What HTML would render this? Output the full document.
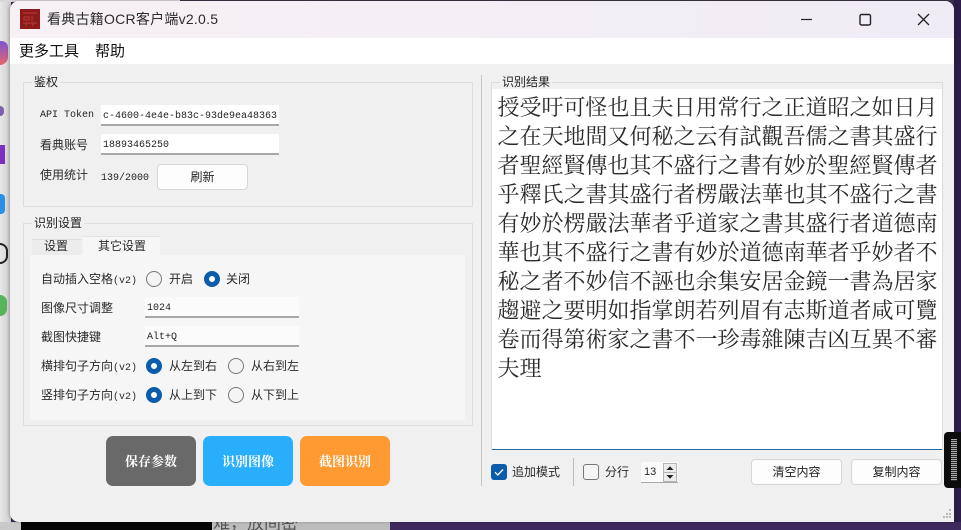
<!DOCTYPE html>
<html lang="zh"><head><meta charset="utf-8"><title>看典古籍OCR客户端v2.0.5</title>
<style>
html,body{margin:0;padding:0}
body{width:961px;height:530px;overflow:hidden;position:relative;background:#3a2757;font-family:"Liberation Sans","Noto Sans CJK SC",sans-serif;color:#222}
div,span{position:absolute;box-sizing:border-box;white-space:nowrap}
.l{font-size:12px;line-height:16px;color:#2a2a2a}
.v{font-style:normal;font-family:"Liberation Mono",monospace;font-size:10px}
.m{font-family:"Liberation Mono","Noto Sans CJK SC",monospace;font-size:10px;line-height:14px;color:#222}
.in{background:#fff;border-bottom:2px solid #a8a8a8;height:21px}
.g{border:1px solid #dcdcdc;background:#f0f0f0}
.gt{background:#f0f0f0;font-size:12px;line-height:16px;padding:0 2px;color:#222}
.r{width:16px;height:16px;border-radius:50%;background:#f4f4f4;border:1px solid #777}
.r.on{background:#fff;border:5px solid #0b5cab}
.b{background:#fdfdfd;border:1px solid #d6d6d6;border-radius:4px;text-align:center;font-size:12px;color:#222}
.bb{width:90px;height:50px;border-radius:7px;color:#fff;font-weight:700;font-size:13px;line-height:50px;text-align:center;font-family:"Noto Serif CJK SC",serif}
.t{left:497.5px;font-family:"Noto Serif CJK SC",serif;font-size:22px;line-height:29px;height:29px;color:#2a2a2a}
</style></head><body>

<!-- desktop background -->
<div style="left:0;top:0;width:11px;height:530px;background:linear-gradient(90deg,#e6e6e6,#cfcfcf)"></div>
<div style="left:0;top:0;width:961px;height:2px;background:#3a3344"></div>
<div style="left:0;top:0;width:180px;height:2px;background:#d8d8d8"></div>
<div style="left:954px;top:0;width:7px;height:530px;background:#2b1c48"></div>
<div style="left:0;top:522px;width:22px;height:8px;background:#c9c9c9"></div>
<div style="left:21px;top:522px;width:191px;height:8px;background:#050505"></div>
<div style="left:212px;top:522px;width:178px;height:8px;background:#bdbdbd;overflow:hidden"><span style="left:1px;top:-8px;font-size:17px;line-height:20px;color:#555">难，放间密</span></div>
<div style="left:390px;top:522px;width:571px;height:8px;background:#3f2a5e"></div>

<!-- desktop icons at left edge -->
<div style="left:0;top:41px;width:8px;height:24px;border-radius:0 8px 10px 0;background:linear-gradient(180deg,#7b55d6,#e8656a)"></div>
<div style="left:0;top:106px;width:4px;height:10px;background:#7a62a8;border-radius:0 5px 5px 0"></div>
<div style="left:0;top:145px;width:5px;height:19px;background:#7c2fc0"></div>
<div style="left:0;top:194px;width:5px;height:20px;background:#2b8fea;border-radius:0 4px 4px 0"></div>
<div style="left:0;top:243px;width:8px;height:21px;border:2px solid #222;border-left:0;border-radius:0 8px 8px 0"></div>
<div style="left:0;top:295px;width:7px;height:21px;background:#55b45c;border-radius:0 10px 10px 0"></div>

<!-- window -->
<div style="left:10px;top:1px;width:944px;height:521px;background:#f0f0f0;border-radius:9px 9px 0 9px;overflow:hidden;box-shadow:-1px 0 3px rgba(0,0,0,.25)">
  <div style="left:0;top:0;width:944px;height:37px;background:linear-gradient(90deg,#f7f1f5,#f0ecf5)"></div>
  <div style="left:0;top:37px;width:944px;height:26px;background:#fff"></div>
</div>

<!-- title bar -->
<svg style="position:absolute;left:20px;top:9px" width="20" height="20" viewBox="0 0 20 20"><rect width="20" height="20" fill="#8c1a1a"/><path d="M3 4h14M4 8h5v3H4zM12 7v5M3 14h14M6 14v3M13 14v3" stroke="#b5352f" stroke-width="1.2" fill="none"/></svg>
<div style="left:47px;top:9px;font-size:14px;line-height:20px;color:#2b2b2b;letter-spacing:.25px">看典古籍OCR客户端v2.0.5</div>
<svg style="position:absolute;left:790px;top:5px" width="150" height="28" viewBox="0 0 150 28" fill="none" stroke="#222">
<path d="M11 14.5H22" stroke-width="1.2"/>
<rect x="70" y="9.5" width="10.5" height="10.5" rx="1.5" stroke-width="1.4"/>
<path d="M128 9l11 11M139 9l-11 11" stroke-width="1.3"/>
</svg>

<!-- menu -->
<div style="left:19px;top:41px;font-size:15px;line-height:21px;color:#111">更多工具</div>
<div style="left:95px;top:41px;font-size:15px;line-height:21px;color:#111">帮助</div>

<!-- 鉴权 -->
<div class="g" style="left:23px;top:82px;width:450px;height:125px"></div>
<div class="gt" style="left:32px;top:74px">鉴权</div>
<div class="m" style="left:40px;top:109px">API Token</div>
<div class="in" style="left:101px;top:105px;width:178px"></div>
<div class="m" style="left:103px;top:110px">c-4600-4e4e-b83c-93de9ea48363</div>
<div class="l" style="left:40px;top:137px">看典账号</div>
<div class="in" style="left:101px;top:134px;width:178px"></div>
<div class="m" style="left:103px;top:139px">18893465250</div>
<div class="l" style="left:40px;top:167px">使用统计</div>
<div class="m" style="left:101px;top:172px">139/2000</div>
<div class="b" style="left:157px;top:164px;width:91px;height:26px;line-height:24px">刷新</div>

<!-- 识别设置 -->
<div class="g" style="left:23px;top:223px;width:450px;height:203px"></div>
<div class="gt" style="left:32px;top:215px">识别设置</div>
<div style="left:32px;top:239px;width:49px;height:16px;background:#ececec;border-top:1px solid #dedede"></div>
<div style="left:83px;top:236px;width:77px;height:20px;background:#f6f6f6;border-top:1px solid #e4e4e4"></div>
<div class="l" style="left:44px;top:238px">设置</div>
<div class="l" style="left:98px;top:238px">其它设置</div>
<div style="left:30px;top:255px;width:435px;height:165px;background:#f6f6f6;border-radius:2px"></div>

<div class="l" style="left:41px;top:271px">自动插入空格<i class="v">(v2)</i></div>
<div class="r" style="left:146px;top:271px"></div><div class="l" style="left:169px;top:271px">开启</div>
<div class="r on" style="left:204px;top:271px"></div><div class="l" style="left:226px;top:271px">关闭</div>

<div class="l" style="left:41px;top:300px">图像尺寸调整</div>
<div class="in" style="left:145px;top:297px;width:154px;background:#fbfbfb"></div>
<div class="m" style="left:147px;top:302px">1024</div>

<div class="l" style="left:41px;top:329px">截图快捷键</div>
<div class="in" style="left:145px;top:326px;width:154px;background:#fbfbfb"></div>
<div class="m" style="left:147px;top:331px">Alt+Q</div>

<div class="l" style="left:41px;top:358px">横排句子方向<i class="v">(v2)</i></div>
<div class="r on" style="left:146px;top:358px"></div><div class="l" style="left:169px;top:358px">从左到右</div>
<div class="r" style="left:228px;top:358px"></div><div class="l" style="left:251px;top:358px">从右到左</div>

<div class="l" style="left:41px;top:387px">竖排句子方向<i class="v">(v2)</i></div>
<div class="r on" style="left:146px;top:387px"></div><div class="l" style="left:169px;top:387px">从上到下</div>
<div class="r" style="left:228px;top:387px"></div><div class="l" style="left:251px;top:387px">从下到上</div>

<!-- action buttons -->
<div class="bb" style="left:106px;top:436px;background:#696969">保存参数</div>
<div class="bb" style="left:203px;top:436px;background:#29aefc">识别图像</div>
<div class="bb" style="left:300px;top:436px;background:#fe9a31">截图识别</div>

<!-- right side -->
<div style="left:481px;top:75px;width:1px;height:411px;background:#c6c6c6"></div>
<div class="g" style="left:491px;top:82px;width:452px;height:368px"></div>
<div class="gt" style="left:500px;top:74px">识别结果</div>
<div style="left:492px;top:89px;width:450px;height:361px;background:#fff;border-bottom:1px solid #1f6aa5"></div>
<div class="t" style="top:92px">授受吁可怪也且夫日用常行之正道昭之如日月</div>
<div class="t" style="top:121px">之在天地間又何秘之云有試觀吾儒之書其盛行</div>
<div class="t" style="top:150px">者聖經賢傳也其不盛行之書有妙於聖經賢傳者</div>
<div class="t" style="top:179px">乎釋氏之書其盛行者楞嚴法華也其不盛行之書</div>
<div class="t" style="top:208px">有妙於楞嚴法華者乎道家之書其盛行者道德南</div>
<div class="t" style="top:237px">華也其不盛行之書有妙於道德南華者乎妙者不</div>
<div class="t" style="top:266px">秘之者不妙信不誣也余集安居金鏡一書為居家</div>
<div class="t" style="top:295px">趨避之要明如指掌朗若列眉有志斯道者咸可覽</div>
<div class="t" style="top:324px">卷而得第術家之書不一珍毒雜陳吉凶互異不審</div>
<div class="t" style="top:353px">夫理</div>

<!-- bottom toolbar -->
<svg style="position:absolute;left:491px;top:464px" width="16" height="16" viewBox="0 0 16 16"><rect width="16" height="16" rx="3" fill="#0b5cab"/><path d="M4 8.2l2.8 2.8L12 5.5" stroke="#fff" stroke-width="1.3" fill="none"/></svg>
<div class="l" style="left:512px;top:464px">追加模式</div>
<div style="left:573px;top:458px;width:1px;height:28px;background:#bcbcbc"></div>
<div style="left:583px;top:464px;width:16px;height:16px;border:1px solid #777;border-radius:3px;background:#f4f4f4"></div>
<div class="l" style="left:605px;top:464px">分行</div>
<div style="left:641px;top:462px;width:37px;height:21px;background:#fbfbfb;border-bottom:1px solid #a8a8a8"></div>
<div class="l" style="left:644px;top:464px;font-size:11px">13</div>
<svg style="position:absolute;left:663px;top:463px" width="14" height="19" viewBox="0 0 14 19"><rect x=".5" y=".5" width="13" height="18" fill="#ececec" stroke="#b5b5b5"/><path d="M.5 9.5h13" stroke="#b5b5b5"/><path d="M3.5 7L7 3.2 10.5 7zM3.5 12L7 15.8 10.5 12z" fill="#222"/></svg>
<div class="b" style="left:751px;top:459px;width:91px;height:26px;line-height:24px">清空内容</div>
<div class="b" style="left:851px;top:459px;width:91px;height:26px;line-height:24px">复制内容</div>

<!-- overlays on right edge -->
<div style="left:944px;top:432px;width:17px;height:56px;background:#0c0c0c;border-radius:4px 0 0 4px"></div>
<div style="left:951px;top:439px;width:6px;height:42px;background:repeating-linear-gradient(180deg,#a8a8a8 0 1px,#2a2a2a 1px 2px)"></div>
<svg style="position:absolute;left:940px;top:508px" width="14" height="14" viewBox="0 0 14 14" fill="#b9b9b9"><rect x="9" y="1" width="2" height="2"/><rect x="6" y="5" width="2" height="2"/><rect x="9" y="5" width="2" height="2"/><rect x="3" y="8" width="2" height="2"/><rect x="6" y="8" width="2" height="2"/><rect x="9" y="8" width="2" height="2"/></svg>
</body></html>
